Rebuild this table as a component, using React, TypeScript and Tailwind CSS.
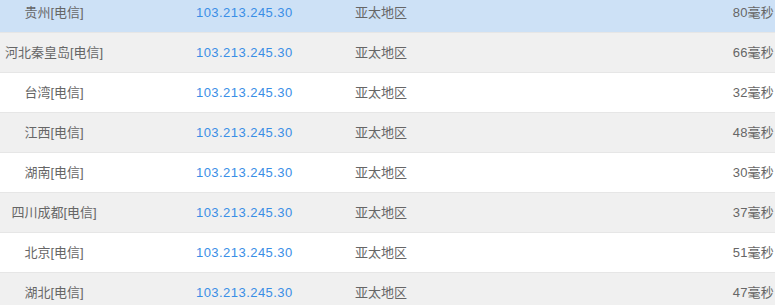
const rows = [
  { name: '贵州[电信]', ms: 80 },
  { name: '河北秦皇岛[电信]', ms: 66 },
  { name: '台湾[电信]', ms: 32 },
  { name: '江西[电信]', ms: 48 },
  { name: '湖南[电信]', ms: 30 },
  { name: '四川成都[电信]', ms: 37 },
  { name: '北京[电信]', ms: 51 },
  { name: '湖北[电信]', ms: 47 },
]

export default function App() {
  return (
    <div
      className="w-[775px] h-[305px] overflow-hidden bg-white text-[13px] text-[#666]"
      style={{ fontFamily: '"Liberation Sans", "Noto Sans CJK SC", sans-serif' }}
    >
      <div className="-mt-[7px]">
        {rows.map((row, i) => (
          <div
            key={row.name}
            className={[
              'flex items-center h-[40px] border-b border-[#e6e6e6]',
              i === 0 ? 'bg-[#cde1f6]' : i % 2 === 1 ? 'bg-[#f0f0f0]' : 'bg-white',
            ].join(' ')}
          >
            <div className="w-[108px] text-center whitespace-nowrap">{row.name}</div>
            <div className="w-[247px] pl-[88px] text-[#3a8ee6] tracking-[0.45px]">103.213.245.30</div>
            <div className="flex-1">亚太地区</div>
            <div className="pr-px text-right tracking-[0.2px]">{row.ms}毫秒</div>
          </div>
        ))}
      </div>
    </div>
  )
}
